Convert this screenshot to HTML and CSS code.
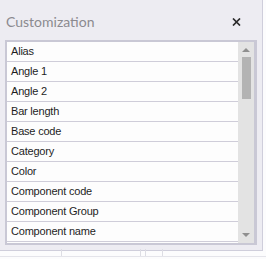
FILE: index.html
```html
<!DOCTYPE html>
<html lang="en">
<head>
    <meta charset="UTF-8">
    <title>Customization</title>
    <link rel="stylesheet" href="styles.css">
</head>
<body>
    <div class="panel">
        <div class="header">
            <span class="title">Customization</span>
            <button class="close" type="button" aria-label="Close">
                <svg width="9" height="8" viewBox="0 0 9 8">
                    <path d="M1 0.5 L8 7.5 M8 0.5 L1 7.5" stroke="#2b2b2b" stroke-width="1.7"/>
                </svg>
            </button>
        </div>
        <div class="listbox">
            <ul class="items">
                <li>Alias</li>
                <li>Angle 1</li>
                <li>Angle 2</li>
                <li>Bar length</li>
                <li>Base code</li>
                <li>Category</li>
                <li>Color</li>
                <li>Component code</li>
                <li>Component Group</li>
                <li>Component name</li>
            </ul>
            <div class="scrollbar">
                <span class="arrow up"></span>
                <div class="track">
                    <div class="thumb"></div>
                </div>
                <span class="arrow down"></span>
            </div>
        </div>
    </div>
    <div class="below">
        <span class="cell c1"></span>
        <span class="cell c2"></span>
        <span class="cell c3"></span>
        <span class="cell c4"></span>
    </div>
</body>
</html>
```

FILE: styles.css
```css
* {
    margin: 0;
    padding: 0;
    box-sizing: border-box;
}

body {
    background-color: #fcfcfd;
    width: 266px;
    height: 259px;
    overflow: hidden;
    font-family: "Liberation Sans", Arial, sans-serif;
}

.panel {
    width: 263px;
    height: 251px;
    background-color: #edecf2;
    border-right: 1px solid #cfcedb;
    border-bottom: 1px solid #cfcedb;
    padding: 0 0 0 5px;
}

.header {
    height: 40px;
    display: flex;
    align-items: center;
    justify-content: space-between;
    padding: 2px 21px 0 1px;
}

.title {
    font-family: Lato, sans-serif;
    font-size: 14px;
    color: #8b8a8f;
}

.close {
    border: none;
    background: none;
    width: 9px;
    height: 8px;
    display: flex;
    margin-top: 1px;
}

.listbox {
    width: 252px;
    height: 205px;
    border: 2px solid #c9c8d5;
    border-right-width: 3px;
    display: flex;
    background-color: #fdfdfd;
}

.items {
    list-style: none;
    flex: 1;
    overflow: hidden;
}

.items li {
    height: 20px;
    border-bottom: 1px solid #cfcdd9;
    padding: 3px 0 0 4px;
    font-size: 11px;
    letter-spacing: -0.2px;
    color: #1e1e1e;
    white-space: nowrap;
}

.scrollbar {
    width: 16px;
    background-color: #e3e3e3;
    display: flex;
    flex-direction: column;
    align-items: center;
}

.arrow {
    width: 0;
    height: 0;
    border-left: 4px solid transparent;
    border-right: 4px solid transparent;
}

.arrow.up {
    margin-top: 6px;
    border-bottom: 4px solid #8f8f8f;
}

.arrow.down {
    margin-bottom: 6px;
    border-top: 4px solid #8f8f8f;
}

.track {
    flex: 1;
    width: 100%;
    padding: 5px 3px 0 4px;
}

.thumb {
    width: 9px;
    height: 42px;
    background-color: #b3b3b3;
}

.below {
    display: flex;
    height: 8px;
    border-bottom: 1px solid #e4e4ea;
    margin-top: -2px;
}

.cell {
    border-right: 1px solid #dddde4;
}

.c1 { width: 62px; }
.c2 { width: 79px; }
.c3 { width: 5px; }
.c4 { width: 17px; }
```
